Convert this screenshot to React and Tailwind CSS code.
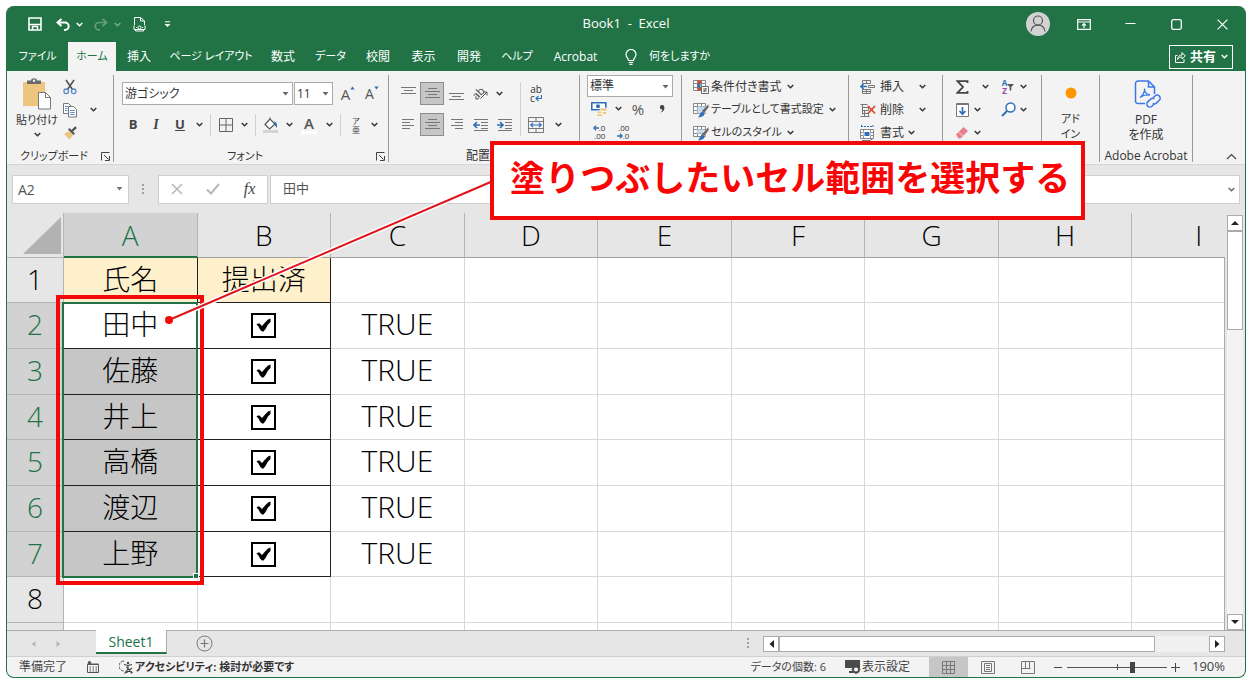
import React from 'react';
import clsx from 'clsx';

const TABS = [
  { label: 'ファイル', width: 'w-[61px]', kana: true },
  { label: 'ホーム', width: 'w-[48px]', active: true, kana: true },
  { label: '挿入', width: 'w-[46px]' },
  { label: 'ページ レイアウト', width: 'w-[98px]', kana: true },
  { label: '数式', width: 'w-[46px]' },
  { label: 'データ', width: 'w-[49px]', kana: true },
  { label: '校閲', width: 'w-[46px]' },
  { label: '表示', width: 'w-[45px]' },
  { label: '開発', width: 'w-[46px]' },
  { label: 'ヘルプ', width: 'w-[50px]', kana: true },
  { label: 'Acrobat', width: 'w-[67px]' },
];

const COLUMNS = ['A', 'B', 'C', 'D', 'E', 'F', 'G', 'H', 'I'];
const NAMES = ['田中', '佐藤', '井上', '高橋', '渡辺', '上野'];
const ROWS = [1, 2, 3, 4, 5, 6, 7, 8, 9];

/* ---------- shared bits ---------- */

function Icon({ w = 16, h = 16, className, children }) {
  return (
    <svg width={w} height={h} viewBox={`0 0 ${w} ${h}`} fill="none" stroke="#555" className={clsx('shrink-0', className)} aria-hidden="true">
      {children}
    </svg>
  );
}

function Chevron({ className }) {
  return (
    <svg width="7" height="5" viewBox="0 0 7 5" fill="none" stroke="currentColor" strokeWidth="1.4" className={clsx('shrink-0', className)} aria-hidden="true">
      <path d="M.7.9 3.5 3.7 6.3.9" />
    </svg>
  );
}

function IconButton({ label, className, children }) {
  return (
    <button type="button" aria-label={label} className={clsx('flex h-[23px] shrink-0 items-center justify-center', className)}>
      {children}
    </button>
  );
}

function More({ label, className = 'w-[14px]' }) {
  return (
    <IconButton label={label} className={className}>
      <Chevron />
    </IconButton>
  );
}

function Separator({ className = 'h-[22px]' }) {
  return (
    <div className="flex w-[9px] shrink-0 items-center justify-center">
      <div className={clsx('w-px bg-[#d0d0d0]', className)} />
    </div>
  );
}

function Combo({ label, value, className }) {
  return (
    <div className={clsx('relative shrink-0', className)}>
      <select aria-label={label} defaultValue={value} className="h-full w-full appearance-none border border-[#ababab] bg-white pl-[2px] text-xs text-[#333]">
        <option>{value}</option>
      </select>
      <svg width="7" height="4" viewBox="0 0 7 4" className="pointer-events-none absolute top-[10px] right-[4px]" aria-hidden="true">
        <path d="M.5 0h6l-3 3.5z" fill="#666" />
      </svg>
    </div>
  );
}

function Group({ name, label, launcher, className, children }) {
  return (
    <section aria-label={name ?? label} className={clsx('mt-1 flex h-[87px] shrink-0 flex-col border-r border-[#9a9a9a] whitespace-nowrap', className)}>
      <div className="h-[75px]">{children}</div>
      <div className="flex h-3 items-center">
        <span className="flex-1 text-center leading-3">{label}</span>
        {launcher && (
          <button type="button" aria-label={`${label}の詳細`} className="pr-[3px]">
            <Icon w={9} h={9}>
              <path d="M.5 8.500V.5H8.500M3 3l4.500 4.500M8.500 4v4.500H4" stroke="#444" />
            </Icon>
          </button>
        )}
      </div>
    </section>
  );
}

function Lines({ rows, className }) {
  return (
    <Icon w={15} h={15} className={className}>
      {rows.map(([x, y, len]) => (
        <path key={y} d={`M${x} ${y + 0.5}h${len}`} stroke="#777" />
      ))}
    </Icon>
  );
}

/* ---------- title bar and tabs ---------- */

function TitleBar() {
  return (
    <header className="flex h-9 items-center text-white">
      <div className="flex flex-1 items-center">
        <button type="button" aria-label="上書き保存" className="ml-[21px]">
          <Icon w={14} h={14}>
            <path d="M1 1h12v12H1z" stroke="#fff" strokeWidth="1.600" />
            <path d="M1 7.500h12M4.500 13V9.500h5V13" stroke="#fff" strokeWidth="1.500" />
          </Icon>
        </button>
        <button type="button" aria-label="元に戻す" className="ml-[14px]">
          <Icon w={15} h={13}>
            <path d="M5.500 1 1.500 4.500l4 3.500M1.500 4.500h7.500a3.700 3.700 0 0 1 0 7.400H8" stroke="#fff" strokeWidth="2" />
          </Icon>
        </button>
        <button type="button" aria-label="元に戻す履歴" className="ml-[5px]">
          <Chevron />
        </button>
        <button type="button" aria-label="やり直し" className="ml-[10px] opacity-30">
          <Icon w={15} h={13}>
            <path d="M9.500 1l4 3.500-4 3.500M13.500 4.500H6a3.700 3.700 0 0 0 0 7.400h1" stroke="#fff" strokeWidth="1.700" />
          </Icon>
        </button>
        <button type="button" aria-label="やり直し履歴" className="ml-[6px] opacity-40">
          <Chevron />
        </button>
        <button type="button" aria-label="印刷プレビュー" className="ml-[12px]">
          <Icon w={13} h={16}>
            <path d="M1.500 9V1.500h6L11.500 5v4M7.500 1.500V5h4" stroke="#fff" />
            <path d="M1 9.500v4M12 9.500v4M2.500 13.500v1.500h8v-1.500M1 13.500h11M3 11.500h1M9 11.500h1" stroke="#fff" />
            <circle cx="6.500" cy="11.500" r="1.500" stroke="#fff" />
          </Icon>
        </button>
        <button type="button" aria-label="クイック アクセス ツール バーのユーザー設定" className="ml-[18px]">
          <Icon w={7} h={7}>
            <path d="M1 .8h5" stroke="#fff" />
            <path d="M.5 3h6l-3 3z" fill="#fff" stroke="none" />
          </Icon>
        </button>
      </div>
      <h1 className="text-[13px] whitespace-pre">Book1  -  Excel</h1>
      <div className="flex flex-1 items-center justify-end">
        <button type="button" aria-label="アカウント" className="flex w-[46px] justify-center">
          <Icon w={24} h={24}>
            <circle cx="12" cy="12" r="12" fill="#d2d2d2" stroke="none" />
            <circle cx="12" cy="8.500" r="4.500" stroke="#555" strokeWidth="1.200" />
            <path d="M5 19.500c.5-4 3.200-6.300 7-6.300s6.500 2.300 7 6.300" stroke="#555" strokeWidth="1.200" />
          </Icon>
        </button>
        <button type="button" aria-label="リボンの表示オプション" className="flex w-[46px] justify-center">
          <Icon w={14} h={11}>
            <path d="M.7.7h12.600v9.600H.7zM.7 3h12.600M7 9V5M5 6.700l2-2 2 2" stroke="#fff" strokeWidth="1.200" />
          </Icon>
        </button>
        <button type="button" aria-label="最小化" className="flex w-[46px] justify-center">
          <Icon w={11} h={11}>
            <path d="M.5 4.500h10" stroke="#fff" strokeWidth="1.200" />
          </Icon>
        </button>
        <button type="button" aria-label="最大化" className="flex w-[46px] justify-center">
          <Icon w={11} h={11}>
            <rect x=".7" y=".7" width="9.600" height="9.600" rx="1.500" stroke="#fff" strokeWidth="1.300" />
          </Icon>
        </button>
        <button type="button" aria-label="閉じる" className="flex w-[46px] justify-center">
          <Icon w={11} h={11}>
            <path d="M.6.6l9.800 9.800M10.400.6.6 10.400" stroke="#fff" strokeWidth="1.200" />
          </Icon>
        </button>
      </div>
    </header>
  );
}

function TabBar() {
  return (
    <nav className="flex h-[29px] items-center text-xs whitespace-nowrap text-white">
      {TABS.map((tab) => (
        <button
          key={tab.label}
          type="button"
          className={clsx('flex h-full shrink-0 items-center justify-center', tab.width, tab.kana && 'text-[11px]', tab.active && 'bg-[#f3f3f3] text-[#217346]')}
        >
          {tab.label}
        </button>
      ))}
      <button type="button" className="ml-4 flex items-center gap-3 text-[11px]">
        <Icon w={12} h={16}>
          <path d="M3.500 11.500C3.500 9 1 8.500 1 5.500a5 5 0 0 1 10 0c0 3-2.500 3.500-2.500 6zM3.700 13.500h4.600M4.500 15.300h3" stroke="#fff" strokeWidth="1.200" />
        </Icon>
        何をしますか
      </button>
      <button type="button" className="mr-3 ml-auto flex h-6 items-center gap-1 border border-white px-1 text-[13px] font-bold">
        <Icon w={12} h={12}>
          <path d="M3.500 4.500h-2v7h8.500V8M3.500 8.500C4 5.500 5.500 4 8 4V1.500L11.300 5 8 8V6C6 6 4.500 6.700 3.500 8.500z" stroke="#fff" />
        </Icon>
        共有
        <Chevron className="ml-px" />
      </button>
    </nav>
  );
}

/* ---------- ribbon ---------- */

function ClipboardGroup() {
  return (
    <Group label="クリップボード" launcher className="w-[107px] text-[11px]">
      <div className="flex h-full pl-[6px]">
        <button type="button" className="flex w-[48px] flex-col items-center pt-[3px]">
          <Icon w={28} h={32}>
            <path d="M0 4h22v24H0z" fill="#ecc57e" stroke="none" />
            <path d="M4 2.500h4C8-.5 14-.5 14 2.500h4V6H4z" fill="#6b6b6b" stroke="none" />
            <circle cx="11" cy="2.800" r="1.200" fill="#f3f3f3" stroke="none" />
            <path d="M15.500 14.500h7l5 5v11.500h-12z" fill="#fff" stroke="#777" />
            <path d="M22.500 14.500v5h5" stroke="#777" />
          </Icon>
          <span className="leading-5">貼り付け</span>
          <Chevron className="mt-[2px]" />
        </button>
        <div className="flex w-[18px] flex-col">
          <IconButton label="切り取り">
            <Icon w={14} h={16}>
              <path d="M3 1l6.500 9.500M11 1 4.500 10.500" stroke="#555" strokeWidth="1.600" />
              <circle cx="3.200" cy="12.300" r="2.300" stroke="#5b8cc7" strokeWidth="1.300" />
              <circle cx="10.700" cy="12.300" r="2.300" stroke="#5b8cc7" strokeWidth="1.300" />
            </Icon>
          </IconButton>
          <IconButton label="コピー">
            <Icon w={14} h={16}>
              <path d="M.5 1.500h5l2.500 2.500v7.500H.5z" fill="#fff" stroke="#777" />
              <path d="M5.500 4.500h5l3 3v7.500h-8z" fill="#fff" stroke="#777" />
              <path d="M2 4.500h3M2 6.500h2.500M2 8.500h2.500M7.200 8.500h4.500M7.200 10.500h4.500M7.200 12.500h4.500" stroke="#5b8cc7" />
            </Icon>
          </IconButton>
          <IconButton label="書式のコピー/貼り付け">
            <Icon w={14} h={14}>
              <path d="M1 8l5-3 4 4L6.500 13.500z" fill="#ecc57e" stroke="none" />
              <path d="M5 3.500l5.500 5.500 1.500-1.500L10 5.500l4-3.500-1.800-1.800-3.800 3.800L6.500 2z" fill="#555" stroke="none" />
            </Icon>
          </IconButton>
        </div>
        <div className="flex w-[28px] items-center justify-center pb-[6px]">
          <More label="コピーのオプション" />
        </div>
      </div>
    </Group>
  );
}

function FontGroup() {
  return (
    <Group label="フォント" launcher className="w-[275px] text-[11px]">
      <div className="flex flex-col gap-2 pt-[7px] pl-2">
        <div className="flex items-center">
          <Combo label="フォント" value="游ゴシック" className="h-[23px] w-[171px]" />
          <Combo label="フォント サイズ" value="11" className="ml-px h-[23px] w-[39px]" />
          <IconButton label="フォント サイズの拡大" className="ml-[3px] w-6 text-[15px] text-[#555]">
            A<svg width="5" height="4" viewBox="0 0 5 4" className="mb-3"><path d="M.3 3.500 2.500.5l2.200 3z" fill="#2f6fba" /></svg>
          </IconButton>
          <IconButton label="フォント サイズの縮小" className="w-6 text-sm text-[#555]">
            A<svg width="5" height="4" viewBox="0 0 5 4" className="mb-3"><path d="M.3.5l2.200 3 2.200-3z" fill="#2f6fba" /></svg>
          </IconButton>
        </div>
        <div className="flex items-center">
          <IconButton label="太字" className="w-[22px] text-[13px] font-bold text-[#444]">B</IconButton>
          <IconButton label="斜体" className="w-6 font-['Liberation_Serif',serif] text-sm font-bold text-[#444] italic">I</IconButton>
          <IconButton label="下線" className="w-6 text-[13px] font-bold text-[#444] underline">U</IconButton>
          <More label="下線の種類" />
          <Separator />
          <IconButton label="罫線" className="w-[22px]">
            <Icon w={14} h={14}>
              <path d="M.5.5h13v13H.5zM7 .5v13M.5 7h13" stroke="#666" />
            </Icon>
          </IconButton>
          <More label="罫線の種類" />
          <Separator />
          <IconButton label="塗りつぶしの色" className="w-[22px]">
            <Icon w={16} h={16}>
              <path d="M7 2 2 7.500 6.500 12 12 7zM7 2V.5" fill="#fff" stroke="#555" strokeWidth="1.200" />
              <path d="M11 4.500c2.500.5 4 3 2.500 6.500-.8-1.500-1.500-2.500-2-4.500z" fill="#2f6fba" stroke="none" />
              <path d="M0 13h15v3H0z" fill="#d4d4d4" stroke="none" />
            </Icon>
          </IconButton>
          <More label="塗りつぶしの色を選ぶ" />
          <IconButton label="フォントの色" className="w-[26px]">
            <span className="w-4 border-b-3 border-white text-center text-[15px] leading-4 font-semibold text-[#555]">A</span>
          </IconButton>
          <More label="フォントの色を選ぶ" />
          <Separator />
          <IconButton label="ふりがなの表示" className="w-[22px]">
            <span className="flex flex-col items-center text-[8px] leading-[9px] text-[#444]">
              <span>ア</span>
              <span>亜</span>
            </span>
          </IconButton>
          <More label="ふりがなの設定" />
        </div>
      </div>
    </Group>
  );
}

function AlignGroup() {
  const center = [[3, 2, 9], [0, 5, 15], [3, 8, 9], [0, 11, 15]];
  return (
    <Group label="配置" launcher className="w-[191px]">
      <div className="flex pt-[7px] pl-[7px]">
        <div className="flex w-[120px] flex-col gap-2">
          <div className="flex">
            <IconButton label="上揃え" className="w-6"><Lines rows={[[0, 1, 15], [3, 4, 9], [0, 7, 15]]} /></IconButton>
            <IconButton label="上下中央揃え" className="w-6 border border-[#8c8c8c] bg-[#c6c6c6]"><Lines rows={center} /></IconButton>
            <IconButton label="下揃え" className="w-6"><Lines rows={[[0, 7, 15], [3, 10, 9], [0, 13, 15]]} /></IconButton>
            <IconButton label="方向" className="w-6">
              <span className="-rotate-45 text-[11px] text-[#444]">ab</span>
              <Icon w={8} h={12} className="-ml-1"><path d="M.5 10.500 6.500 4.500M3.500 4h3.500v3.500" stroke="#555" /></Icon>
            </IconButton>
            <More label="方向の種類" />
          </div>
          <div className="flex">
            <IconButton label="左揃え" className="w-6"><Lines rows={[[1, 2, 12], [1, 5, 8], [1, 8, 12], [1, 11, 8]]} /></IconButton>
            <IconButton label="中央揃え" className="w-6 border border-[#8c8c8c] bg-[#c6c6c6]"><Lines rows={center} /></IconButton>
            <IconButton label="右揃え" className="w-6"><Lines rows={[[2, 2, 12], [6, 5, 8], [2, 8, 12], [6, 11, 8]]} /></IconButton>
            <IconButton label="インデントを減らす" className="w-6">
              <Icon w={15} h={14}>
                <path d="M1 1.500h14M8 4.500h7M8 7.500h7M8 10.500h7M1 12.500h14" stroke="#777" />
                <path d="M7 7H1.500M4 4 1 7l3 3" stroke="#2f6fba" strokeWidth="1.700" />
              </Icon>
            </IconButton>
            <IconButton label="インデントを増やす" className="w-6">
              <Icon w={15} h={14}>
                <path d="M1 1.500h14M8 4.500h7M8 7.500h7M8 10.500h7M1 12.500h14" stroke="#777" />
                <path d="M0 7h5.500M3 4l3 3-3 3" stroke="#2f6fba" strokeWidth="1.700" />
              </Icon>
            </IconButton>
          </div>
        </div>
        <Separator className="h-[54px]" />
        <div className="flex flex-col gap-2">
          <IconButton label="折り返して全体を表示する" className="w-[22px]">
            <span className="flex flex-col text-[10px] leading-[9px] text-[#333]">
              <span>ab</span>
              <span className="flex items-center">
                c
                <Icon w={7} h={7}><path d="M6.500 0v3.500H1M3.500 1 1 3.500 3.500 6" stroke="#2f6fba" strokeWidth="1.200" /></Icon>
              </span>
            </span>
          </IconButton>
          <div className="flex">
            <IconButton label="セルを結合して中央揃え" className="w-[22px]">
              <Icon w={16} h={16}>
                <path d="M.5.500h15v15H.5zM.5 4.500h15M.5 11.500h15M8 .5v4M8 11.500v4" stroke="#777" />
                <path d="M2.500 8h11M5 6 2.800 8 5 10M11 6l2.200 2L11 10" stroke="#2f6fba" strokeWidth="1.200" />
              </Icon>
            </IconButton>
            <More label="セル結合の種類" className="w-[23px]" />
          </div>
        </div>
      </div>
    </Group>
  );
}

function NumberGroup() {
  return (
    <Group name="数値" className="w-[102px]">
      <div className="flex flex-col pl-[7px]">
        <Combo label="表示形式" value="標準" className="h-[22px] w-[86px]" />
        <div className="flex">
          <IconButton label="通貨表示形式" className="w-6">
            <Icon w={16} h={16}>
              <path d="M.8 1.800h14v7H.8z" fill="#fff" stroke="#2f6fba" strokeWidth="1.600" />
              <circle cx="7" cy="5.200" r="2" fill="#2f6fba" stroke="none" />
              <path d="M9 7h6.500v3H9zM6 10h6v2.500H6zM6 13h6v2.500H6zM10.500 10.500h5v3h-5z" fill="#ecc57e" stroke="#fff" strokeWidth=".6" />
            </Icon>
          </IconButton>
          <More label="通貨の種類" />
          <IconButton label="パーセント スタイル" className="w-[26px] text-[15px] text-[#555]">%</IconButton>
          <IconButton label="桁区切りスタイル" className="w-[22px]">
            <Icon w={6} h={8}><path d="M3 0a2.300 2.300 0 1 0 .3 4.600C3.200 6 2.400 7 1.200 7.500 4 7.300 5.500 5.200 5.400 2.600A2.400 2.400 0 0 0 3 0z" fill="#444" stroke="none" /></Icon>
          </IconButton>
        </div>
        <div className="flex">
          <IconButton label="小数点以下の表示桁数を増やす" className="w-6">
            <span className="flex flex-col items-end text-[8px] leading-2 text-[#333]">
              <span className="flex items-center">
                <Icon w={6} h={6}><path d="M6 3H1M3 .8.8 3 3 5.200" stroke="#2f6fba" strokeWidth="1.300" /></Icon>.0
              </span>
              <span>.00</span>
            </span>
          </IconButton>
          <IconButton label="小数点以下の表示桁数を減らす" className="w-6">
            <span className="flex flex-col items-end text-[8px] leading-2 text-[#333]">
              <span>.00</span>
              <span className="flex items-center">
                <Icon w={6} h={6}><path d="M0 3h5M3 .8 5.200 3 3 5.200" stroke="#2f6fba" strokeWidth="1.300" /></Icon>.0
              </span>
            </span>
          </IconButton>
        </div>
      </div>
    </Group>
  );
}

function SheetGlyph({ children }) {
  return (
    <Icon w={16} h={16}>
      <path d="M.5 1.500h12v10H.5zM.5 4.500h12M.5 8.500h12M4.500 1.500v10M8.500 1.500v10" fill="#fff" stroke="#888" />
      {children}
    </Icon>
  );
}

function Brush() {
  return (
    <>
      <path d="M15.500 2 8.500 9l2.500 2.500L16 5z" fill="#666" stroke="#f3f3f3" strokeWidth=".5" />
      <path d="M4.500 15.500c2.500-.5 1.500-5 5-5.500 3.500.5 3 5-5 5.500z" fill="#2f6fba" stroke="none" />
    </>
  );
}

function StylesGroup() {
  return (
    <Group name="スタイル" className="w-[167px]">
      <div className="flex flex-col items-start pl-[11px]">
        <button type="button" className="flex h-[23px] items-center gap-[2px]">
          <SheetGlyph>
            <path d="M4.500 1.500h4v3h-4zM4.500 8.500h4v3h-4z" fill="#d9482b" stroke="none" />
            <path d="M4.500 4.500h3v4h-3z" fill="#2f6fba" stroke="none" />
            <path d="M8.500 7.500h7v7h-7z" fill="#fff" stroke="#666" />
            <path d="M10 10h4M10 12h4M13 9l-2 4" stroke="#444" strokeWidth=".8" />
          </SheetGlyph>
          条件付き書式 <Chevron className="ml-[3px]" />
        </button>
        <button type="button" className="flex h-[23px] items-center gap-[2px] text-[11px]">
          <SheetGlyph>
            <path d="M4.500 4.500h8v7h-8z" fill="#c5d9ef" stroke="none" />
            <Brush />
          </SheetGlyph>
          テーブルとして書式設定 <Chevron className="ml-[3px]" />
        </button>
        <button type="button" className="flex h-[23px] items-center gap-[2px] text-[11px]">
          <SheetGlyph>
            <path d="M3.500 4.500h7v4h-7z" fill="#c5d9ef" stroke="none" />
            <Brush />
          </SheetGlyph>
          セルのスタイル <Chevron className="ml-[3px]" />
        </button>
      </div>
    </Group>
  );
}

function CellsGroup() {
  return (
    <Group name="セル" className="w-[94px]">
      <div className="flex flex-col pl-[11px]">
        <div className="flex items-center">
          <button type="button" className="flex h-[23px] items-center gap-1">
            <Icon>
              <path d="M2.500 1.500h8v3h-8zM6.500 1.500v3M2.500 10.500h8v4h-8zM6.500 10.500v4M2.500 12.500h8" stroke="#777" />
              <path d="M8.500 6.500h6v2h-6z" fill="#fff" stroke="#777" />
              <path d="M7 7.500H1M3.500 5 1 7.500 3.500 10" stroke="#2f6fba" strokeWidth="1.600" />
            </Icon>
            挿入
          </button>
          <More label="挿入の種類" className="ml-[11px] w-[14px]" />
        </div>
        <div className="flex items-center">
          <button type="button" className="flex h-[23px] items-center gap-1">
            <Icon>
              <path d="M.5 2.500h7M2.500 2.500v10M2.500 5.500h6v3h-6M.5 14.500h9M4.500 8.500v6M2.500 11.500h6v3" stroke="#777" />
              <path d="M8 4l7 7.500M15 4 8 11.500" stroke="#d9482b" strokeWidth="1.800" />
            </Icon>
            削除
          </button>
          <More label="削除の種類" className="ml-[11px] w-[14px]" />
        </div>
        <button type="button" className="flex h-[23px] items-center gap-1">
          <Icon>
            <path d="M1 1.500h12M1.500 0v3M13 0v3" stroke="#2f6fba" strokeDasharray="2 1" />
            <path d="M.5 4.500h13v9H.5zM.5 10.500h13M10.500 4.500v9M3.500 4.500v9M.5 7.500h13" fill="#fff" stroke="#888" />
            <path d="M4 6.500h6v5H4z" fill="#2f6fba" stroke="#fff" />
            <path d="M2 15.500h8l3-2" stroke="#777" />
          </Icon>
          書式 <Chevron />
        </button>
      </div>
    </Group>
  );
}

function EditGroup() {
  return (
    <Group name="編集" className="w-[99px]">
      <div className="flex flex-col pl-[9px]">
        <div className="flex">
          <IconButton label="オート SUM" className="w-5">
            <Icon w={13} h={14}><path d="M11.500 3V1.200H1.500L7 7l-5.500 5.800h10V11" stroke="#444" strokeWidth="1.800" /></Icon>
          </IconButton>
          <More label="集計方法" className="w-[26px]" />
          <IconButton label="並べ替えとフィルター" className="w-5">
            <span className="flex flex-col text-[8px] leading-2 font-bold">
              <span className="text-[#2f6fba]">A</span>
              <span className="text-[#9a3fa5]">Z</span>
            </span>
            <Icon w={7} h={8}><path d="M0 1h7L4.300 4v3.500H2.700V4z" fill="#555" stroke="none" /></Icon>
          </IconButton>
          <More label="並べ替えの種類" className="w-[10px]" />
        </div>
        <div className="flex">
          <IconButton label="フィル" className="w-5">
            <Icon w={13} h={14}>
              <path d="M.5.5h12v13H.5z" fill="#fff" stroke="#777" />
              <path d="M.5 1.500h12" stroke="#777" />
              <path d="M6.500 4v7M3.500 8l3 3.200 3-3.200" stroke="#2f6fba" strokeWidth="1.700" />
            </Icon>
          </IconButton>
          <More label="フィルの種類" className="w-[10px]" />
          <IconButton label="検索と選択" className="ml-4 w-5">
            <Icon w={15} h={15}>
              <circle cx="9.500" cy="5.500" r="4.500" fill="#fff" stroke="#2f6fba" strokeWidth="1.500" />
              <path d="M6 9 1 14" stroke="#2f6fba" strokeWidth="2" />
            </Icon>
          </IconButton>
          <More label="検索の種類" className="w-[10px]" />
        </div>
        <div className="flex">
          <IconButton label="クリア" className="w-5">
            <Icon w={14} h={13}>
              <path d="M1 8.500 8.500 1l4.500 4-7.500 7.500H3.500z" fill="#e8808c" stroke="none" />
              <path d="M3.500 6 8 10.300" stroke="#f7d0d4" />
            </Icon>
          </IconButton>
          <More label="クリアの種類" className="w-[10px]" />
        </div>
      </div>
    </Group>
  );
}

function Ribbon() {
  return (
    <div className="flex h-[94px] overflow-hidden border-b border-[#d5d5d5] bg-[#f3f3f3] text-xs text-[#333]">
      <ClipboardGroup />
      <FontGroup />
      <AlignGroup />
      <NumberGroup />
      <StylesGroup />
      <CellsGroup />
      <EditGroup />
      <Group name="アドイン" className="w-[58px]">
        <button type="button" className="flex w-full flex-col items-center pt-3 text-[11px] leading-[15px]">
          <Icon w={12} h={12}><circle cx="6" cy="6" r="5.500" fill="#ff9500" stroke="none" /></Icon>
          <span className="mt-3">アド</span>
          <span>イン</span>
        </button>
      </Group>
      <Group label="Adobe Acrobat" className="w-[93px]">
        <button type="button" className="flex w-full flex-col items-center pt-[5px] leading-[15px]">
          <Icon w={28} h={30} className="ml-1">
            <path d="M11 23.500H4a2.500 2.500 0 0 1-2.500-2.500V3.500A2.500 2.500 0 0 1 4 1h10.500L20.500 7v7M14.500 1v6h6" stroke="#3b78e7" strokeWidth="1.500" />
            <path d="M6 17.500c3-2 5-6 4.500-9 0 3.500 2 6 5.500 6.500-4-.3-7.500.5-10 2.500z" stroke="#3b78e7" strokeWidth="1.300" />
            <path d="M18.500 18.500l2.500-2.500a3 3 0 0 1 4.300 4.300l-3 2.800a2.700 2.700 0 0 1-3.500.2M20.500 23.500l-2.500 2.700a3 3 0 0 1-4.300-4.300l3-2.800a2.700 2.700 0 0 1 3.500-.2" stroke="#3b78e7" strokeWidth="1.500" />
          </Icon>
          <span className="mt-[2px]">PDF</span>
          <span>を作成</span>
        </button>
      </Group>
      <button type="button" aria-label="リボンを折りたたむ" className="mt-auto mr-2 mb-1 ml-auto">
        <Icon w={11} h={7}><path d="M1 6l4.500-4.500L10 6" stroke="#444" strokeWidth="1.200" /></Icon>
      </button>
    </div>
  );
}

/* ---------- formula bar ---------- */

function Dots() {
  return (
    <svg width="3" height="11" viewBox="0 0 3 11" fill="#a0a0a0" aria-hidden="true">
      <path d="M0 0h2v2H0zM0 4h2v2H0zM0 8h2v2H0z" />
    </svg>
  );
}

function FormulaBar() {
  return (
    <div className="flex h-12 items-center bg-[#e6e6e6] px-[5px]">
      <div className="relative h-[29px] w-[117px]">
        <input aria-label="名前ボックス" defaultValue="A2" className="h-full w-full border border-[#cfcfcf] bg-white pl-[5px] text-[14px] text-[#555]" />
        <svg width="7" height="4" viewBox="0 0 7 4" className="pointer-events-none absolute top-3 right-[6px]" aria-hidden="true">
          <path d="M.5 0h6l-3 3.500z" fill="#777" />
        </svg>
      </div>
      <div className="flex w-[29px] justify-center"><Dots /></div>
      <div className="flex h-[29px] w-[110px] items-center justify-around border border-[#cfcfcf] bg-white">
        <button type="button" aria-label="キャンセル">
          <Icon w={12} h={12}><path d="M1 1l10 10M11 1 1 11" stroke="#b8b8b8" strokeWidth="1.600" /></Icon>
        </button>
        <button type="button" aria-label="入力">
          <Icon w={14} h={12}><path d="M1 6.500 5 10.500 13 1" stroke="#b8b8b8" strokeWidth="2" /></Icon>
        </button>
        <button type="button" aria-label="関数の挿入" className="font-['Liberation_Serif',serif] text-base text-[#444] italic">
          fx
        </button>
      </div>
      <div className="relative ml-[2px] h-[29px] min-w-0 flex-1">
        <input aria-label="数式バー" defaultValue="田中" className="h-full w-full border border-[#cfcfcf] bg-white pb-1 pl-3 text-[13px] text-[#555]" />
        <Chevron className="pointer-events-none absolute top-3 right-[5px] text-[#666]" />
      </div>
    </div>
  );
}

/* ---------- worksheet ---------- */

function CheckCell() {
  return (
    <div className="relative mx-auto h-[25px] w-[25px]">
      <input type="checkbox" aria-label="提出済" defaultChecked className="block h-full w-full appearance-none border-2 border-black bg-white" />
      <svg width="15" height="14" viewBox="0 0 15 14" className="pointer-events-none absolute top-[5px] left-[5px]" aria-hidden="true">
        <path d="M.5 6.500 2 5.500h1.500L6 8l3.500-4L12 1.500 14.500.5v3.500L12 6.500 9.500 11 7.500 13.500H6L4 11.500 2.500 8.500z" />
      </svg>
    </div>
  );
}

function SheetRow({ row }) {
  const isTitle = row === 1;
  const isData = row > 1 && row < 8;
  const lineBlack = 'border-r border-b border-[#222]';
  const line = 'border-r border-b border-[#d8d8d8]';

  return (
    <tr className={row % 3 === 1 ? 'h-[45px]' : 'h-[46px]'}>
      <th
        scope="row"
        className={clsx('border-r border-b p-0 pb-[3px] font-light', isData ? 'border-r-[#217346] border-b-[#b5b5b5] bg-[#d2d2d2] text-[#217346]' : 'border-[#b5b5b5] bg-[#e6e6e6] text-black')}
      >
        {row < 9 && row}
      </th>
      <td
        className={clsx('p-0 pb-[3px]', isTitle && `bg-[#fff0cc] ${lineBlack}`, isData && lineBlack, row > 2 && isData && 'bg-[#c6c6c6]', row > 7 && line)}
      >
        {isTitle ? '氏名' : NAMES[row - 2]}
      </td>
      <td className={clsx('p-0', isTitle && `bg-[#fff0cc] pb-[3px] ${lineBlack}`, isData && lineBlack, row > 7 && line)}>
        {isTitle && '提出済'}
        {isData && <CheckCell />}
      </td>
      <td className={clsx('p-0 pb-[3px] text-[30px]', line)}>{isData && 'TRUE'}</td>
      {COLUMNS.slice(3).map((col) => (
        <td key={col} className={clsx('p-0', line)} />
      ))}
    </tr>
  );
}

function Worksheet() {
  return (
    <div className="relative h-[417px] min-w-0 flex-1 overflow-hidden bg-white">
      <table className="w-[1259px] table-fixed border-separate border-spacing-0 text-center text-[28px] leading-[36px] font-light text-black">
        <thead>
          <tr className="h-[45px]">
            <th aria-label="すべて選択" className="w-[57px] border-r border-b border-[#b5b5b5] bg-[#e6e6e6] p-0">
              <svg width="38" height="37" viewBox="0 0 38 37" className="ml-auto mr-[2px]" aria-hidden="true">
                <path d="M38 0v37H0z" fill="#b2b2b2" />
              </svg>
            </th>
            {COLUMNS.map((col) => (
              <th
                key={col}
                scope="col"
                className={clsx('border-r border-r-[#b5b5b5] p-0 font-light', col === 'A' ? 'border-b-2 border-b-[#217346] bg-[#d2d2d2] text-[#217346]' : 'border-b border-b-[#a0a0a0] bg-[#e6e6e6]')}
              >
                {col}
              </th>
            ))}
          </tr>
        </thead>
        <tbody>
          {ROWS.map((row) => (
            <SheetRow key={row} row={row} />
          ))}
        </tbody>
      </table>

      {/* selected range A2:A7 with its fill handle */}
      <div className="pointer-events-none absolute top-[89px] left-[55px] h-[276px] w-[136px] border-2 border-[#217346]">
        <div className="absolute -right-[3px] -bottom-[3px] h-[6px] w-[6px] border border-white bg-[#217346]" />
      </div>
      <div className="pointer-events-none absolute top-[82px] left-[49px] h-[290px] w-[148px] border-4 border-[#f20a0a]" />
    </div>
  );
}

function VerticalScroll() {
  return (
    <div className="mt-[2px] flex w-5 shrink-0 flex-col items-center">
      <button type="button" aria-label="上へスクロール" className="flex h-4 w-4 items-center justify-center border border-[#ababab] bg-white">
        <Icon w={8} h={4}><path d="M0 4l4-4 4 4z" fill="#222" stroke="none" /></Icon>
      </button>
      <div className="w-4 flex-1 bg-[#f3f3f3]">
        <div className="h-[99px] border border-[#ababab] bg-white" />
      </div>
      <button type="button" aria-label="下へスクロール" className="flex h-4 w-4 items-center justify-center border border-[#ababab] bg-white">
        <Icon w={8} h={4}><path d="M0 0h8L4 4z" fill="#222" stroke="none" /></Icon>
      </button>
    </div>
  );
}

function SheetTabs() {
  return (
    <div className="flex h-[26px] border-t border-[#ababab] bg-[#e6e6e6]">
      <div className="flex w-[89px] items-center gap-5 pl-6">
        <Icon w={5} h={6}><path d="M4.500 0v6L.5 3z" fill="#b8b8b8" stroke="none" /></Icon>
        <Icon w={5} h={6}><path d="M.5 0v6l4-3z" fill="#b8b8b8" stroke="none" /></Icon>
      </div>
      <button type="button" className="-mt-px h-6 w-[71px] border-r border-b-2 border-r-[#ababab] border-b-[#217346] bg-white text-[14px] text-[#217346]">
        Sheet1
      </button>
      <button type="button" aria-label="新しいシート" className="ml-[29px]">
        <Icon w={17} h={17}>
          <circle cx="8.500" cy="8.500" r="7.500" stroke="#777" />
          <path d="M4.500 8.500h8M8.500 4.500v8" stroke="#777" strokeWidth="1.200" />
        </Icon>
      </button>
      <div className="mr-5 ml-auto flex items-center">
        <Dots />
        <button type="button" aria-label="左へスクロール" className="ml-[13px] flex h-4 w-4 items-center justify-center border border-[#ababab] bg-white">
          <Icon w={5} h={8}><path d="M5 0v8L.5 4z" fill="#222" stroke="none" /></Icon>
        </button>
        <div className="h-4 w-[430px] bg-[#f0f0f0]">
          <div className="h-full w-[376px] border border-[#ababab] bg-white" />
        </div>
        <button type="button" aria-label="右へスクロール" className="flex h-4 w-4 items-center justify-center border border-[#ababab] bg-white">
          <Icon w={5} h={8}><path d="M0 0v8l4.500-4z" fill="#222" stroke="none" /></Icon>
        </button>
      </div>
    </div>
  );
}

function StatusBar() {
  return (
    <footer className="flex h-[21px] items-center border-t border-[#d0d0d0] bg-[#f3f3f3] text-xs whitespace-nowrap text-[#444]">
      <span className="ml-3">準備完了</span>
      <Icon w={12} h={12} className="ml-[20px]">
        <path d="M.5 3.500h11v8H.5zM.5 3h11" stroke="#555" />
        <path d="M2.500 6h1.500M5.500 6H7M8.500 6H10M2.500 8h1.500M5.500 8H7M8.500 8H10M2.500 10h1.500M5.500 10H7M8.500 10H10" stroke="#555" />
        <circle cx="2.500" cy="1.700" r="1.700" fill="#555" stroke="none" />
      </Icon>
      <button type="button" className="ml-[20px] flex items-center gap-px text-[11px] font-bold text-[#333]">
        <Icon w={15} h={14}>
          <path d="M5 1a5 5 0 0 0 0 10" stroke="#555" strokeDasharray="3 1" />
          <path d="M5 4.500l4 1 4-1M9 5.500V9l-3.500 4.500M9 9l4 4.500M7.500 7l6 6M7 13l6-5" stroke="#444" strokeWidth="1.100" />
          <circle cx="9" cy="3" r="1.200" fill="#444" stroke="none" />
        </Icon>
        アクセシビリティ: 検討が必要です
      </button>
      <span className="ml-auto text-[11px]">データの個数: 6</span>
      <button type="button" className="ml-[19px] flex items-center gap-px">
        <Icon w={16} h={14}>
          <path d="M0 0h15v8H0zM4 11h4v2H4z" fill="#4a4a4a" stroke="none" />
          <circle cx="11" cy="9.500" r="3" fill="#f3f3f3" stroke="#4a4a4a" strokeWidth="1.800" />
          <path d="M11 5v9M6.500 9.500h9" stroke="#4a4a4a" strokeDasharray="1.500 6" />
        </Icon>
        表示設定
      </button>
      <button type="button" aria-label="標準" className="ml-[19px] flex h-5 w-[39px] items-center justify-center bg-[#c6c6c6]">
        <Icon w={13} h={13}><path d="M.5.500h12v12H.5zM.5 4.500h12M.5 8.500h12M4.500.5v12M8.500.5v12" stroke="#777" /></Icon>
      </button>
      <button type="button" aria-label="ページ レイアウト" className="flex w-10 justify-center">
        <Icon w={14} h={13}>
          <path d="M.5.500h13v12H.5zM3.500 2.500h7v8h-7z" stroke="#777" />
          <path d="M5 4.500h4M5 6.500h4M5 8.500h4" stroke="#777" />
        </Icon>
      </button>
      <button type="button" aria-label="改ページ プレビュー" className="flex w-10 justify-center">
        <Icon w={14} h={13}><path d="M.5.500h13v12H.5zM4.500.5v7M8.500.5v7M.5 7.500h9" stroke="#777" /></Icon>
      </button>
      <button type="button" aria-label="縮小" className="ml-[6px]">
        <Icon w={8} h={9}><path d="M0 4.500h8" stroke="#444" /></Icon>
      </button>
      <div className="relative ml-[5px] flex h-4 w-[100px] items-center">
        <div className="absolute top-[5px] left-1/2 h-[6px] w-px bg-[#555]" />
        <input
          type="range"
          aria-label="ズーム"
          min="0"
          max="100"
          defaultValue="66"
          className="relative h-3 w-full appearance-none bg-transparent [&::-webkit-slider-runnable-track]:h-px [&::-webkit-slider-runnable-track]:bg-[#555] [&::-webkit-slider-thumb]:-mt-[5px] [&::-webkit-slider-thumb]:h-[11px] [&::-webkit-slider-thumb]:w-[5px] [&::-webkit-slider-thumb]:appearance-none [&::-webkit-slider-thumb]:bg-[#444]"
        />
      </div>
      <button type="button" aria-label="拡大" className="ml-1">
        <Icon w={9} h={9}><path d="M0 4.500h9M4.500 0v9" stroke="#444" /></Icon>
      </button>
      <span className="mr-5 ml-3 text-[13px]">190%</span>
    </footer>
  );
}

/* ---------- note box with its leader line ---------- */

function Callout() {
  return (
    <>
      <svg width="330" height="150" viewBox="0 0 330 150" className="pointer-events-none absolute top-[177px] left-[165px]" aria-hidden="true">
        <path d="M4 143 328 4" stroke="#fff" strokeWidth="5" />
        <path d="M4 143 328 4" stroke="#e0141a" strokeWidth="2" />
        <circle cx="4" cy="143" r="4" fill="#f20a0a" />
      </svg>
      <p className="absolute top-[141px] left-[490px] border-4 border-[#f20a0a] bg-white pt-[10px] pr-[11px] pb-4 pl-4 text-[35px] leading-[45px] font-bold whitespace-nowrap text-[#fa0505] [font-feature-settings:normal]">
        塗りつぶしたいセル範囲を選択する
      </p>
    </>
  );
}

export default function App() {
  return (
    <main className="relative bg-white p-[6px] pr-[7px] font-['Open_Sans','Noto_Sans_CJK_JP',sans-serif] [font-feature-settings:'palt']">
      <div className="overflow-hidden rounded-lg border-x border-b border-[#217346] bg-[#217346]">
        <TitleBar />
        <TabBar />
        <Ribbon />
        <FormulaBar />
        <div className="flex bg-[#e6e6e6]">
          <Worksheet />
          <div className="mt-11 w-px bg-[#ababab]" />
          <VerticalScroll />
        </div>
        <SheetTabs />
        <StatusBar />
      </div>
      <Callout />
    </main>
  );
}
